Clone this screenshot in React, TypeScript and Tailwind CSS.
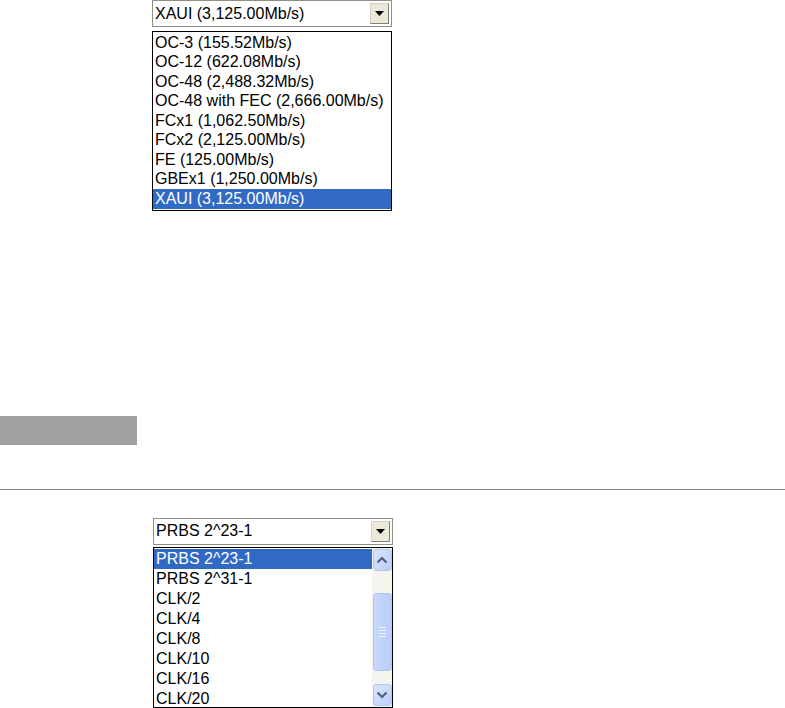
import React from 'react';

const rateItems = [
  'OC-3 (155.52Mb/s)',
  'OC-12 (622.08Mb/s)',
  'OC-48 (2,488.32Mb/s)',
  'OC-48 with FEC (2,666.00Mb/s)',
  'FCx1 (1,062.50Mb/s)',
  'FCx2 (2,125.00Mb/s)',
  'FE (125.00Mb/s)',
  'GBEx1 (1,250.00Mb/s)',
  'XAUI (3,125.00Mb/s)',
];

const patternItems = ['PRBS 2^23-1', 'PRBS 2^31-1', 'CLK/2', 'CLK/4', 'CLK/8', 'CLK/10', 'CLK/16', 'CLK/20'];

function DropArrow() {
  return (
    <div className="w-[19px] h-[21px] shrink-0 flex items-center justify-center bg-[#ece9d8] border border-[#d4d0c8] border-r-[#808080] border-b-[#808080]">
      <svg width="9" height="5" viewBox="0 0 9 5">
        <path d="M0 0h9L4.5 5z" fill="#000" />
      </svg>
    </div>
  );
}

function Combo({ value }: { value: string }) {
  return (
    <div className="w-[240px] h-[27px] shrink-0 flex items-center bg-white border border-[#8f8f84] pl-[2px] pr-[2px]">
      <span className="flex-1 leading-none text-black">{value}</span>
      <DropArrow />
    </div>
  );
}

function ScrollBtn({ up }: { up?: boolean }) {
  return (
    <div className="w-[19px] h-[22px] shrink-0 rounded-[3px] border border-[#b4c8f6] bg-gradient-to-br from-[#dce6fd] to-[#b9cdf9] flex items-center justify-center">
      <svg width="12" height="8" viewBox="0 0 12 8">
        <path d={up ? 'M1.5 6.5L6 2L10.5 6.5' : 'M1.5 1.5L6 6L10.5 1.5'} stroke="#4d6185" strokeWidth="2.2" fill="none" />
      </svg>
    </div>
  );
}

export default function App() {
  return (
    <div className="w-[785px] h-[708px] overflow-hidden bg-white flex flex-col text-[16px] text-black" style={{ fontFamily: '"Liberation Sans", Arial, sans-serif' }}>
      {/* -- Rate selector -- */}
      <div className="shrink-0 pl-[152px] flex flex-col">
        <Combo value="XAUI (3,125.00Mb/s)" />
        <div className="mt-[4px] w-[240px] shrink-0 border border-black bg-white flex flex-col py-[1px]">
          {rateItems.map((item, i) => (
            <div
              key={item}
              className={`h-[19.5px] shrink-0 flex items-center pl-[2px] leading-none ${i === rateItems.length - 1 ? 'bg-[#316ac5] text-white' : ''}`}
            >
              {item}
            </div>
          ))}
        </div>
      </div>

      {/* -- Gray bar -- */}
      <div className="mt-[205px] shrink-0 w-[137px] h-[29px] bg-[#a0a0a0]" />

      {/* -- Divider -- */}
      <div className="mt-[44px] shrink-0 h-px w-full bg-[#808080]" />

      {/* -- Pattern selector -- */}
      <div className="mt-[28px] shrink-0 pl-[153px] flex flex-col">
        <Combo value="PRBS 2^23-1" />
        <div className="mt-[2px] shrink-0 w-[240px] h-[161px] border border-black bg-white flex overflow-hidden">
          <div className="flex-1 flex flex-col py-[1px] overflow-hidden">
            {patternItems.map((item, i) => (
              <div
                key={item}
                className={`h-[20px] shrink-0 flex items-center pl-[2px] leading-none ${i === 0 ? 'bg-[#316ac5] text-white' : ''}`}
              >
                {item}
              </div>
            ))}
          </div>
          <div className="w-[20px] bg-[#f5f4ef] flex flex-col items-center py-[1px]">
            <ScrollBtn up />
            <div className="flex-1 w-full flex flex-col items-center pt-[22px] pb-[13px]">
              <div className="w-[19px] flex-1 rounded-[3px] border border-[#b4c8f6] bg-gradient-to-r from-[#c9d8fc] to-[#b9cdf9] flex flex-col items-center justify-center gap-[2px]">
                {[0, 1, 2, 3].map(n => (
                  <div key={n} className="w-[7px] h-px bg-[#eef3fe]" />
                ))}
              </div>
            </div>
            <ScrollBtn />
          </div>
        </div>
      </div>
    </div>
  );
}
